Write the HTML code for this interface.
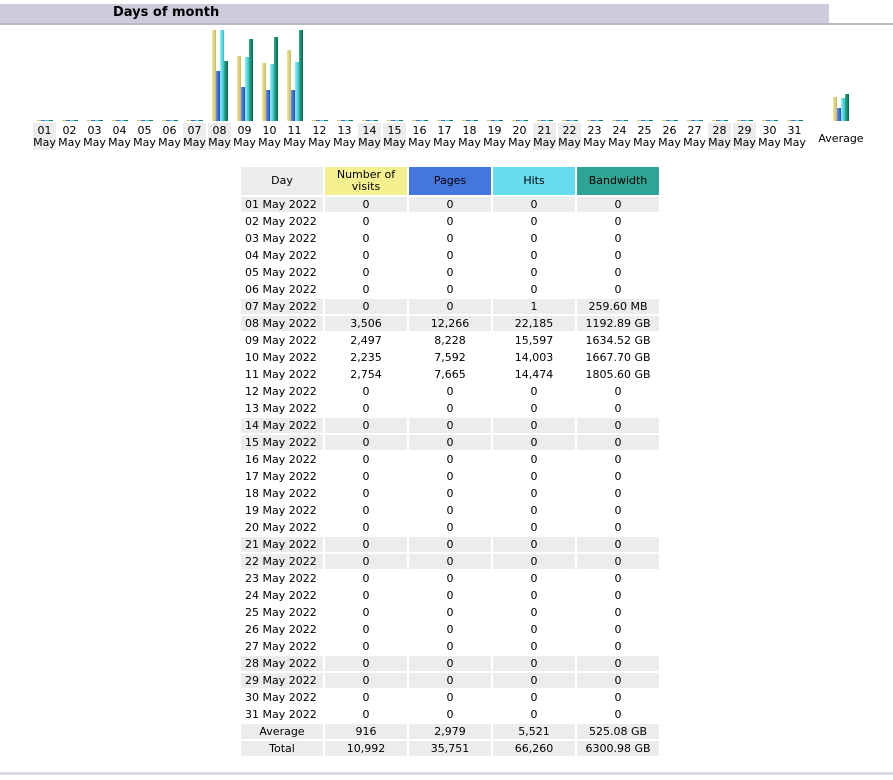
<!DOCTYPE html>
<html><head><meta charset="utf-8"><style>
body{margin:0;width:893px;height:780px;background:#fff;position:relative;overflow:hidden;font-family:"DejaVu Sans","Liberation Sans",sans-serif;font-size:11px;color:#000}
.hdr{position:absolute;left:0;top:4px;width:829px;height:19px;background:#ccccdd}
.hdr span{position:absolute;left:113px;top:1px;font-weight:bold;font-size:13px}
.line{position:absolute;left:0;top:23px;width:893px;height:2px;background:#b8b8c4}
.bot{position:absolute;left:0;top:772px;width:893px;height:3px;background:#dcdce6}
.b{position:absolute;width:4px;bottom:659px}
.v{background:linear-gradient(90deg,#f0e8a0,#c8b860)}
.p{background:linear-gradient(90deg,#6890f0,#2848b8)}
.h{background:linear-gradient(90deg,#90f0f8,#30c0d0)}
.w{background:linear-gradient(90deg,#30b090,#086848)}
.z{position:absolute;top:120px;width:16px;height:1px;background:linear-gradient(90deg,#d8c870 25%,#4070d0 25% 50%,#50d0e0 50% 75%,#108060 75%)}
.lb{position:absolute;top:123px;width:23px;height:27px;text-align:center;line-height:12px;padding-top:2px;box-sizing:border-box}
.we{background:#ececec}
table{position:absolute;left:239px;top:165px;border-spacing:2px;font-size:11px}
td{height:15px;padding:0;text-align:center;width:82px;line-height:15px}
td.d{text-align:left;padding-left:4px;width:78px}
tr.g td{background:#ececec}
th{height:28px;font-weight:normal;padding:0;line-height:12px}
</style></head><body>
<div class="hdr"><span>Days of month</span></div>
<div class="line"></div>

<div class="z" style="left:37px"></div><div class="z" style="left:62px"></div><div class="z" style="left:87px"></div><div class="z" style="left:112px"></div><div class="z" style="left:137px"></div><div class="z" style="left:162px"></div><div class="z" style="left:187px"></div>
<div class="z" style="left:312px"></div><div class="z" style="left:337px"></div><div class="z" style="left:362px"></div><div class="z" style="left:387px"></div><div class="z" style="left:412px"></div><div class="z" style="left:437px"></div><div class="z" style="left:462px"></div><div class="z" style="left:487px"></div><div class="z" style="left:512px"></div><div class="z" style="left:537px"></div><div class="z" style="left:562px"></div><div class="z" style="left:587px"></div><div class="z" style="left:612px"></div><div class="z" style="left:637px"></div><div class="z" style="left:662px"></div><div class="z" style="left:687px"></div><div class="z" style="left:712px"></div><div class="z" style="left:737px"></div><div class="z" style="left:762px"></div><div class="z" style="left:787px"></div>

<div class="b v" style="left:212px;height:91px"></div><div class="b p" style="left:216px;height:50px"></div><div class="b h" style="left:220px;height:91px"></div><div class="b w" style="left:224px;height:60px"></div>
<div class="b v" style="left:237px;height:65px"></div><div class="b p" style="left:241px;height:34px"></div><div class="b h" style="left:245px;height:64px"></div><div class="b w" style="left:249px;height:82px"></div>
<div class="b v" style="left:262px;height:58px"></div><div class="b p" style="left:266px;height:31px"></div><div class="b h" style="left:270px;height:57px"></div><div class="b w" style="left:274px;height:84px"></div>
<div class="b v" style="left:287px;height:71px"></div><div class="b p" style="left:291px;height:31px"></div><div class="b h" style="left:295px;height:59px"></div><div class="b w" style="left:299px;height:91px"></div>
<div class="b v" style="left:833px;height:24px"></div><div class="b p" style="left:837px;height:13px"></div><div class="b h" style="left:841px;height:23px"></div><div class="b w" style="left:845px;height:27px"></div>

<div class="lb we" style="left:33px">01<br>May</div><div class="lb" style="left:58px">02<br>May</div><div class="lb" style="left:83px">03<br>May</div><div class="lb" style="left:108px">04<br>May</div><div class="lb" style="left:133px">05<br>May</div><div class="lb" style="left:158px">06<br>May</div><div class="lb we" style="left:183px">07<br>May</div><div class="lb we" style="left:208px">08<br>May</div><div class="lb" style="left:233px">09<br>May</div><div class="lb" style="left:258px">10<br>May</div><div class="lb" style="left:283px">11<br>May</div><div class="lb" style="left:308px">12<br>May</div><div class="lb" style="left:333px">13<br>May</div><div class="lb we" style="left:358px">14<br>May</div><div class="lb we" style="left:383px">15<br>May</div><div class="lb" style="left:408px">16<br>May</div><div class="lb" style="left:433px">17<br>May</div><div class="lb" style="left:458px">18<br>May</div><div class="lb" style="left:483px">19<br>May</div><div class="lb" style="left:508px">20<br>May</div><div class="lb we" style="left:533px">21<br>May</div><div class="lb we" style="left:558px">22<br>May</div><div class="lb" style="left:583px">23<br>May</div><div class="lb" style="left:608px">24<br>May</div><div class="lb" style="left:633px">25<br>May</div><div class="lb" style="left:658px">26<br>May</div><div class="lb" style="left:683px">27<br>May</div><div class="lb we" style="left:708px">28<br>May</div><div class="lb we" style="left:733px">29<br>May</div><div class="lb" style="left:758px">30<br>May</div><div class="lb" style="left:783px">31<br>May</div>
<div style="position:absolute;left:812px;top:132px;width:58px;text-align:center">Average</div>

<table>
<tr><th style="background:#ececec">Day</th><th style="background:#f4f090">Number of<br>visits</th><th style="background:#4477dd">Pages</th><th style="background:#66ddee">Hits</th><th style="background:#2ea495">Bandwidth</th></tr>
<tr class="g"><td class="d">01 May 2022</td><td>0</td><td>0</td><td>0</td><td>0</td></tr>
<tr><td class="d">02 May 2022</td><td>0</td><td>0</td><td>0</td><td>0</td></tr>
<tr><td class="d">03 May 2022</td><td>0</td><td>0</td><td>0</td><td>0</td></tr>
<tr><td class="d">04 May 2022</td><td>0</td><td>0</td><td>0</td><td>0</td></tr>
<tr><td class="d">05 May 2022</td><td>0</td><td>0</td><td>0</td><td>0</td></tr>
<tr><td class="d">06 May 2022</td><td>0</td><td>0</td><td>0</td><td>0</td></tr>
<tr class="g"><td class="d">07 May 2022</td><td>0</td><td>0</td><td>1</td><td>259.60 MB</td></tr>
<tr class="g"><td class="d">08 May 2022</td><td>3,506</td><td>12,266</td><td>22,185</td><td>1192.89 GB</td></tr>
<tr><td class="d">09 May 2022</td><td>2,497</td><td>8,228</td><td>15,597</td><td>1634.52 GB</td></tr>
<tr><td class="d">10 May 2022</td><td>2,235</td><td>7,592</td><td>14,003</td><td>1667.70 GB</td></tr>
<tr><td class="d">11 May 2022</td><td>2,754</td><td>7,665</td><td>14,474</td><td>1805.60 GB</td></tr>
<tr><td class="d">12 May 2022</td><td>0</td><td>0</td><td>0</td><td>0</td></tr>
<tr><td class="d">13 May 2022</td><td>0</td><td>0</td><td>0</td><td>0</td></tr>
<tr class="g"><td class="d">14 May 2022</td><td>0</td><td>0</td><td>0</td><td>0</td></tr>
<tr class="g"><td class="d">15 May 2022</td><td>0</td><td>0</td><td>0</td><td>0</td></tr>
<tr><td class="d">16 May 2022</td><td>0</td><td>0</td><td>0</td><td>0</td></tr>
<tr><td class="d">17 May 2022</td><td>0</td><td>0</td><td>0</td><td>0</td></tr>
<tr><td class="d">18 May 2022</td><td>0</td><td>0</td><td>0</td><td>0</td></tr>
<tr><td class="d">19 May 2022</td><td>0</td><td>0</td><td>0</td><td>0</td></tr>
<tr><td class="d">20 May 2022</td><td>0</td><td>0</td><td>0</td><td>0</td></tr>
<tr class="g"><td class="d">21 May 2022</td><td>0</td><td>0</td><td>0</td><td>0</td></tr>
<tr class="g"><td class="d">22 May 2022</td><td>0</td><td>0</td><td>0</td><td>0</td></tr>
<tr><td class="d">23 May 2022</td><td>0</td><td>0</td><td>0</td><td>0</td></tr>
<tr><td class="d">24 May 2022</td><td>0</td><td>0</td><td>0</td><td>0</td></tr>
<tr><td class="d">25 May 2022</td><td>0</td><td>0</td><td>0</td><td>0</td></tr>
<tr><td class="d">26 May 2022</td><td>0</td><td>0</td><td>0</td><td>0</td></tr>
<tr><td class="d">27 May 2022</td><td>0</td><td>0</td><td>0</td><td>0</td></tr>
<tr class="g"><td class="d">28 May 2022</td><td>0</td><td>0</td><td>0</td><td>0</td></tr>
<tr class="g"><td class="d">29 May 2022</td><td>0</td><td>0</td><td>0</td><td>0</td></tr>
<tr><td class="d">30 May 2022</td><td>0</td><td>0</td><td>0</td><td>0</td></tr>
<tr><td class="d">31 May 2022</td><td>0</td><td>0</td><td>0</td><td>0</td></tr>
<tr class="g"><td>Average</td><td>916</td><td>2,979</td><td>5,521</td><td>525.08 GB</td></tr>
<tr class="g"><td>Total</td><td>10,992</td><td>35,751</td><td>66,260</td><td>6300.98 GB</td></tr>
</table>
<div class="bot"></div>
</body></html>
